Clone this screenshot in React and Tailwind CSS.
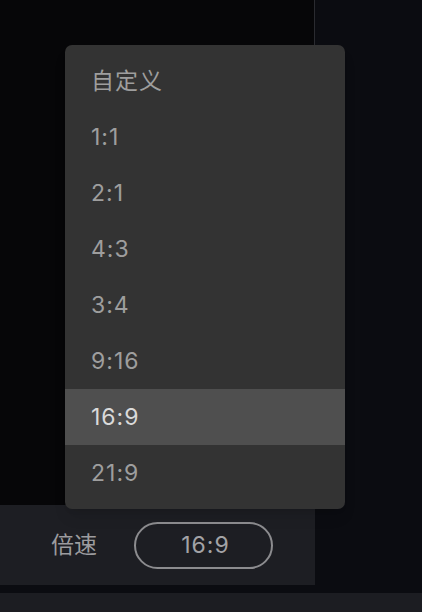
import React from "react";

const ratios = ["自定义", "1:1", "2:1", "4:3", "3:4", "9:16", "16:9", "21:9"];

const App = () => {
  const selected = "16:9";
  return (
    <div
      className="relative w-[422px] h-[612px] bg-[#0b0c11] flex flex-col overflow-hidden"
      style={{ fontFamily: '"Inter", "Noto Sans CJK SC", sans-serif' }}
    >
      <div className="flex">
        <div className="w-[315px] flex flex-col">
          <div className="h-[505px] bg-[#060608] border-r border-[#2a2b30]"></div>
          <div className="h-[80px] bg-[#1d1e23] flex items-center pl-[51px] gap-[37px]">
            <span className="text-[23px] text-[#9c9c9f]">倍速</span>
            <div className="w-[139px] h-[47px] rounded-full border-2 border-[#8c8c8f] flex items-center justify-center pl-[4px] text-[23px] tracking-[1px] text-[#a3a3a6]">
              16:9
            </div>
          </div>
        </div>
      </div>
      <div className="h-[8px]"></div>
      <div className="flex-1 bg-[#1c1d22]"></div>

      {/* dropdown menu */}
      <div className="absolute left-[65px] top-[45px] w-[280px] bg-[#333333] rounded-[7px] py-[8px] shadow-lg">
        {ratios.map((r) => (
          <div
            key={r}
            className={
              r === selected
                ? "h-[56px] flex items-center pl-[26px] text-[23px] tracking-[1px] bg-[#4f4f4f] text-[#dadada]"
                : "h-[56px] flex items-center pl-[26px] text-[23px] tracking-[1px] text-[#9e9e9e]"
            }
          >
            {r}
          </div>
        ))}
      </div>
    </div>
  );
};

export default App;
